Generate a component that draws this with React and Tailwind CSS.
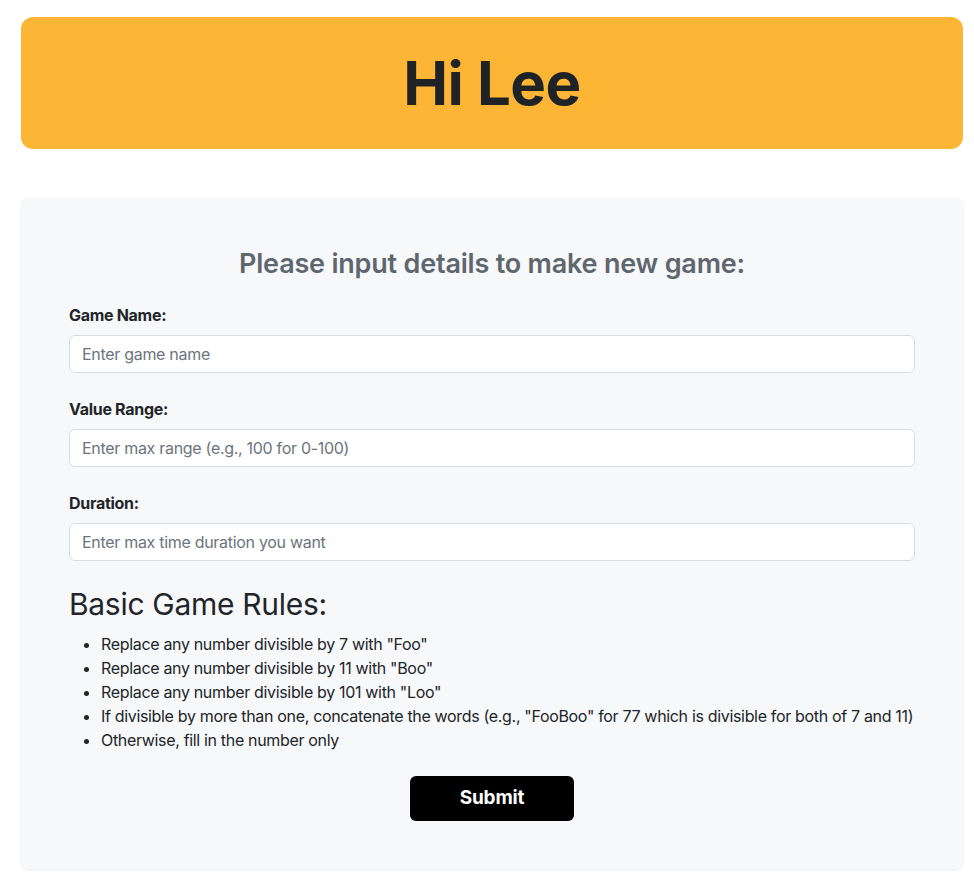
export default function App() {
  const rules = [
    'Replace any number divisible by 7 with "Foo"',
    'Replace any number divisible by 11 with "Boo"',
    'Replace any number divisible by 101 with "Loo"',
    'If divisible by more than one, concatenate the words (e.g., "FooBoo" for 77 which is divisible for both of 7 and 11)',
    'Otherwise, fill in the number only',
  ];

  return (
    <div className="w-[974px] bg-white pl-[21px] pt-[17px] pb-4 text-[#212529]" style={{ fontFamily: 'Inter, "Noto Sans", sans-serif' }}>
      <div className="w-[942px]">
        <header className="flex h-[132px] items-center justify-center rounded-xl bg-[#fcb535]">
          <h1 className="text-[60px] font-bold tracking-[-0.5px] text-[#1f2326]">Hi Lee</h1>
        </header>

        <div className="mt-[49px] rounded-lg bg-[#f7f8fa] px-12 pt-[48px] pb-12 shadow-[0_1px_3px_rgba(0,0,0,0.08)]">
          <h2 className="text-center text-[27px] font-semibold leading-[36px] tracking-[-0.2px] text-[#5e666e]">
            Please input details to make new game:
          </h2>

          <form className="mt-[22px]" onSubmit={(e) => e.preventDefault()}>
            <Field label="Game Name:" placeholder="Enter game name" />
            <Field label="Value Range:" placeholder="Enter max range (e.g., 100 for 0-100)" />
            <Field label="Duration:" placeholder="Enter max time duration you want" last />

            <h3 className="mt-[25px] text-[30px] leading-[36px] font-normal tracking-[-0.3px] text-[#212529]">Basic Game Rules:</h3>
            <ul className="mt-[10px] list-disc pl-8 text-[16px] leading-6 tracking-[-0.33px] text-[#212529]">
              {rules.map((r) => (
                <li key={r}>{r}</li>
              ))}
            </ul>

            <div className="mt-6 flex justify-center">
              <button type="submit" className="h-[45px] w-[164px] rounded-md bg-black text-[19px] font-bold tracking-[-0.2px] text-white">
                Submit
              </button>
            </div>
          </form>
        </div>
      </div>
    </div>
  );
}

function Field({ label, placeholder, last }) {
  return (
    <div className={last ? '' : 'mb-[25px]'}>
      <label className="block text-[16px] font-bold leading-[22px] tracking-[-0.3px] text-[#212529]">{label}</label>
      <input
        type="text"
        placeholder={placeholder}
        className="mt-[9px] block h-[38px] w-full rounded-md border border-[#dadee2] bg-white px-3 text-[16px] tracking-[-0.3px] text-[#212529] placeholder:text-[#6c747c] outline-none"
      />
    </div>
  );
}
